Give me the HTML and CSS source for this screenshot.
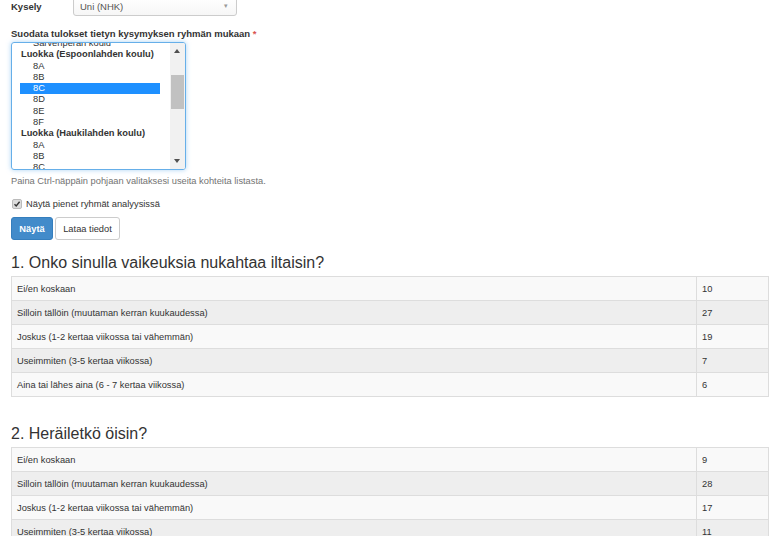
FILE: index.html
```html
<!DOCTYPE html>
<html lang="fi">
<head>
<meta charset="utf-8">
<title>Kysely</title>
<link rel="stylesheet" href="styles.css">
</head>
<body>
<div class="page">
  <div class="survey-row">
    <label class="lbl">Kysely</label>
    <div class="select">
      <span>Uni (NHK)</span>
      <span class="caret">&#9662;</span>
    </div>
  </div>

  <div class="filter-label">Suodata tulokset tietyn kysymyksen ryhmän mukaan <span class="req">*</span></div>
  <div class="listbox">
    <div class="options">
      <div class="opt sub clipped">Sarvenperän koulu</div>
      <div class="opt grp">Luokka (Espoonlahden koulu)</div>
      <div class="opt sub">8A</div>
      <div class="opt sub">8B</div>
      <div class="opt sub sel">8C</div>
      <div class="opt sub">8D</div>
      <div class="opt sub">8E</div>
      <div class="opt sub">8F</div>
      <div class="opt grp">Luokka (Haukilahden koulu)</div>
      <div class="opt sub">8A</div>
      <div class="opt sub">8B</div>
      <div class="opt sub">8C</div>
    </div>
    <div class="scrollbar">
      <div class="arrow up"></div>
      <div class="track"><div class="thumb"></div></div>
      <div class="arrow down"></div>
    </div>
  </div>
  <div class="help">Paina Ctrl-näppäin pohjaan valitaksesi useita kohteita listasta.</div>

  <div class="check-row">
    <span class="checkbox"><svg width="8" height="8" viewBox="0 0 8 8"><path d="M1.5 4.3 L3.2 6 L6.6 1.8" fill="none" stroke="#333" stroke-width="1.4"/></svg></span>
    <span>Näytä pienet ryhmät analyysissä</span>
  </div>

  <div class="buttons">
    <button class="btn primary">Näytä</button>
    <button class="btn default">Lataa tiedot</button>
  </div>

  <h3 class="q">1. Onko sinulla vaikeuksia nukahtaa iltaisin?</h3>
  <table class="res">
    <tr><td>Ei/en koskaan</td><td class="n">10</td></tr>
    <tr><td>Silloin tällöin (muutaman kerran kuukaudessa)</td><td class="n">27</td></tr>
    <tr><td>Joskus (1-2 kertaa viikossa tai vähemmän)</td><td class="n">19</td></tr>
    <tr><td>Useimmiten (3-5 kertaa viikossa)</td><td class="n">7</td></tr>
    <tr><td>Aina tai lähes aina (6 - 7 kertaa viikossa)</td><td class="n">6</td></tr>
  </table>

  <h3 class="q q2">2. Heräiletkö öisin?</h3>
  <table class="res">
    <tr><td>Ei/en koskaan</td><td class="n">9</td></tr>
    <tr><td>Silloin tällöin (muutaman kerran kuukaudessa)</td><td class="n">28</td></tr>
    <tr><td>Joskus (1-2 kertaa viikossa tai vähemmän)</td><td class="n">17</td></tr>
    <tr><td>Useimmiten (3-5 kertaa viikossa)</td><td class="n">11</td></tr>
  </table>
</div>
</body>
</html>
```

FILE: styles.css
```css
html, body {
  margin: 0;
  padding: 0;
  background: #fff;
  overflow: hidden;
}
body {
  font-family: "Liberation Sans", Arial, sans-serif;
  font-size: 9.3px;
  color: #333;
}
.page {
  padding: 0 3px 0 11px;
}
.survey-row {
  display: flex;
  align-items: center;
  margin-top: -5px;
  height: 22px;
}
.lbl {
  font-weight: bold;
  font-size: 9.5px;
  width: 62px;
  flex: none;
}
.select {
  width: 164px;
  flex: none;
  height: 20px;
  box-sizing: border-box;
  border: 1px solid #ccc;
  border-radius: 3px;
  background: linear-gradient(#fff, #f6f6f6);
  display: flex;
  align-items: center;
  justify-content: space-between;
  padding: 0 8px 0 6px;
  font-size: 9.5px;
  color: #555;
  box-shadow: inset 0 1px 1px rgba(0,0,0,.05);
}
.caret {
  font-size: 7px;
  color: #999;
}
.filter-label {
  margin-top: 12px;
  font-weight: bold;
  font-size: 9.5px;
  height: 10px;
  line-height: 10px;
}
.req { color: #d9534f; }
.listbox {
  margin-top: 3px;
  width: 175px;
  height: 128px;
  box-sizing: border-box;
  border: 1px solid #66afe9;
  border-radius: 3px;
  box-shadow: 0 0 5px rgba(102,175,233,.55);
  display: flex;
  overflow: hidden;
}
.options {
  flex: 1;
  padding: 0 0 0 8px;
  overflow: hidden;
}
.opt {
  height: 11.3px;
  line-height: 11.3px;
  font-size: 9.3px;
  white-space: nowrap;
}
.opt.clipped {
  margin-top: -5px;
}
.grp {
  font-weight: bold;
  padding-left: 1px;
}
.sub {
  padding-left: 13px;
}
.sel {
  background: #1e90ff;
  color: #fff;
  width: 127px;
}
.scrollbar {
  width: 15px;
  background: #f1f1f1;
  display: flex;
  flex-direction: column;
  align-items: stretch;
}
.arrow {
  height: 15px;
  position: relative;
}
.arrow::after {
  content: "";
  position: absolute;
  left: 4px;
  width: 0; height: 0;
  border-left: 3.5px solid transparent;
  border-right: 3.5px solid transparent;
}
.arrow.up::after {
  top: 6px;
  border-bottom: 4px solid #505050;
}
.arrow.down::after {
  top: 5px;
  border-top: 4px solid #505050;
}
.track {
  flex: 1;
  padding-top: 17px;
  display: flex;
  justify-content: center;
}
.thumb {
  width: 13px;
  height: 34px;
  background: #c1c1c1;
}
.help {
  margin-top: 5px;
  color: #737373;
  font-size: 9.3px;
  height: 12px;
  line-height: 12px;
}
.check-row {
  margin-top: 11px;
  display: flex;
  align-items: center;
  gap: 4px;
  font-size: 9.3px;
  height: 12px;
}
.checkbox {
  width: 8px;
  height: 8px;
  border-radius: 2px;
  background: #ddd;
  border: 0.5px solid #bbb;
  display: inline-flex;
  margin-left: 1px;
}
.buttons {
  margin-top: 7px;
  display: flex;
  gap: 2px;
}
.btn {
  height: 23px;
  box-sizing: border-box;
  font-family: "Liberation Sans", Arial, sans-serif;
  font-size: 9.3px;
  border-radius: 3px;
  padding: 0 8px;
  white-space: nowrap;
  cursor: pointer;
}
.primary {
  width: 42px;
  padding: 0;
  background: #428bca;
  border: 1px solid #357ebd;
  color: #fff;
  font-weight: bold;
}
.default {
  width: 65px;
  padding: 0;
  background: #fff;
  border: 1px solid #ccc;
  color: #333;
}
.q {
  margin: 13px 0 0;
  font-size: 16px;
  font-weight: normal;
  height: 19px;
  line-height: 19px;
  color: #333;
}
.q2 {
  margin-top: 27px;
}
.res {
  margin-top: 4px;
  width: 758px;
  border-collapse: collapse;
  font-size: 9.3px;
}
.res td {
  border: 1px solid #ddd;
  height: 24px;
  box-sizing: border-box;
  padding: 0 5px;
  background: #f9f9f9;
}
.res tr:nth-child(even) td {
  background: #eeeeee;
}
.res td.n {
  width: 72px;
}
```
